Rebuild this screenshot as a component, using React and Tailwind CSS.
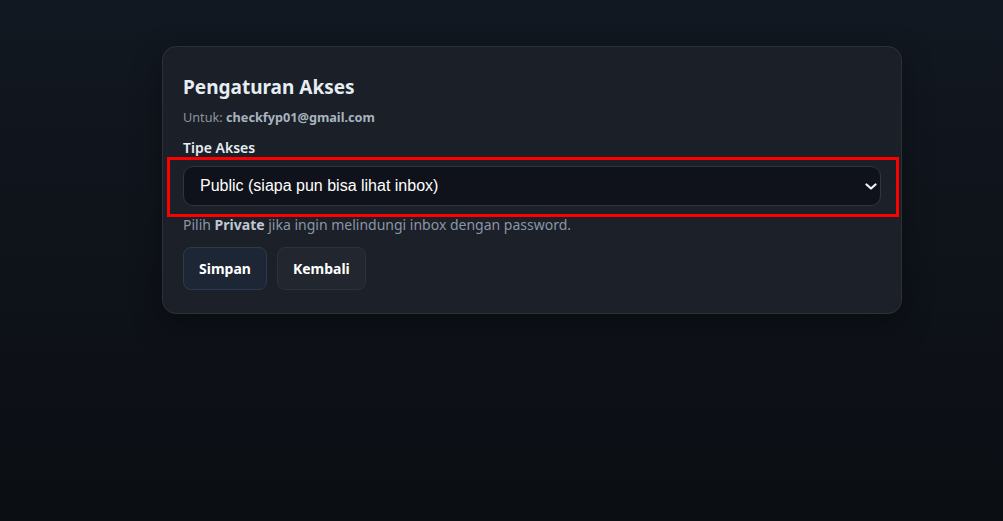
import { useState } from "react";

const App = () => {
  const [akses, setAkses] = useState("public");

  return (
    <div
      className="min-h-[521px] w-full bg-gradient-to-b from-[#121821] to-[#0b0e13] pt-[46px] pl-[162px]"
      style={{ fontFamily: '"Noto Sans", "Liberation Sans", sans-serif' }}
    >
      <div className="relative w-[740px] rounded-[14px] border border-[#2b313b] bg-gradient-to-b from-[#1a1f28] to-[#1b2029] px-5 pt-[26px] pb-[23px] shadow-[0_10px_30px_rgba(0,0,0,0.35)]">
        <h2 className="text-[19px] font-bold leading-7 text-[#e6edf3]">
          Pengaturan Akses
        </h2>
        <p className="mt-2 text-[12.7px] leading-4 text-[#8b949e]">
          Untuk: <span className="font-bold text-[#a9b3bf]">checkfyp01@gmail.com</span>
        </p>

        <label
          htmlFor="tipe-akses"
          className="mt-[13px] block text-[14px] font-semibold leading-5 text-[#e6edf3]"
        >
          Tipe Akses
        </label>
        <div className="relative mt-[8px]">
          <select
            id="tipe-akses"
            value={akses}
            onChange={(e) => setAkses(e.target.value)}
            className="h-10 w-full appearance-none rounded-[10px] border border-[#2f3542] bg-[#0f121a] pl-4 pr-10 text-[16px] text-white outline-none"
            style={{ fontFamily: '"Liberation Sans", Arial, sans-serif' }}
          >
            <option value="public">Public (siapa pun bisa lihat inbox)</option>
            <option value="private">Private (butuh password)</option>
          </select>
          <svg
            className="pointer-events-none absolute right-[4px] top-[17px] h-[7px] w-[12px]"
            viewBox="0 0 12 7"
            fill="none"
          >
            <path d="M1.5 1.5 6 5.5 10.5 1.5" stroke="#f0f3f6" strokeWidth="2.2" strokeLinecap="round" strokeLinejoin="round" />
          </svg>
        </div>
        <p className="mt-[10px] text-[14px] leading-[18px] text-[#8b96a5]">
          Pilih <span className="font-bold text-[#c0c8d2]">Private</span> jika ingin melindungi inbox dengan password.
        </p>

        <div className="mt-[13px] flex gap-[10px]">
          <button className="h-[43px] rounded-lg border border-[#2e3a4b] bg-[#1c2634] px-[15px] text-[14px] font-bold text-white">
            Simpan
          </button>
          <button className="h-[43px] rounded-lg border border-[#2c313a] bg-[#22262e] px-[15px] text-[14px] font-bold text-white">
            Kembali
          </button>
        </div>

        {/* highlight around the select */}
        <div className="pointer-events-none absolute left-[4px] top-[110px] h-[60px] w-[732px] border-[3px] border-[#ff0000]" />
      </div>
    </div>
  );
};

export default App;
